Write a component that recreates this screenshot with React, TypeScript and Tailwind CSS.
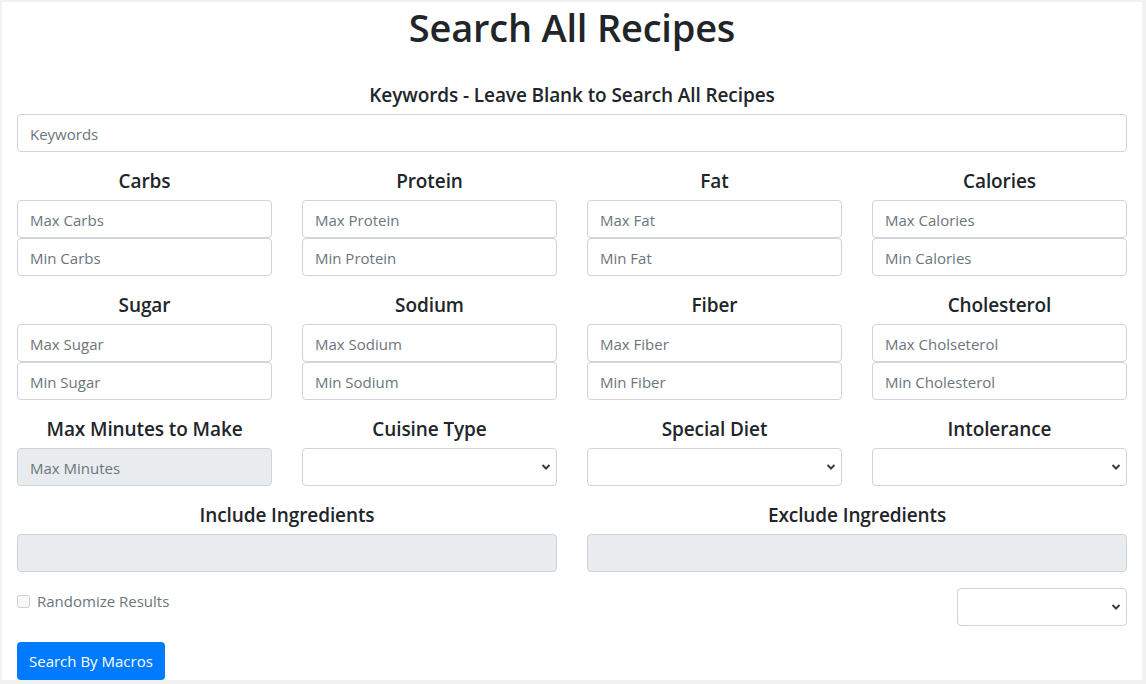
import React from "react";

const font = { fontFamily: '"Segoe UI", "Open Sans", "Noto Sans", sans-serif' };

function Heading({ children }: { children: React.ReactNode }) {
  return (
    <h5 className="mb-2 pt-[2px] text-center text-[19px] font-semibold leading-[22px] tracking-[-0.1px] text-[#212529]">
      {children}
    </h5>
  );
}

function TextInput({
  placeholder,
  disabled,
  className = "",
}: {
  placeholder?: string;
  disabled?: boolean;
  className?: string;
}) {
  return (
    <input
      type="text"
      placeholder={placeholder}
      disabled={disabled}
      className={`block h-[38px] w-full rounded-[4px] border border-[#ced4da] px-3 pt-[2px] text-[15px] text-[#495057] placeholder:text-[#6c757d] outline-none ${
        disabled ? "bg-[#e9ecef]" : "bg-white"
      } ${className}`}
    />
  );
}

function Select({ className = "" }: { className?: string }) {
  return (
    <div className={`relative ${className}`}>
      <select className="block h-[38px] w-full appearance-none rounded-[4px] border border-[#ced4da] bg-white px-3 text-[15px] text-[#495057] outline-none">
        <option></option>
      </select>
      <svg
        className="pointer-events-none absolute right-[6px] top-1/2 -translate-y-1/2"
        width="10"
        height="7"
        viewBox="0 0 10 7"
      >
        <path d="M1.5 1.5 L5 5 L8.5 1.5" fill="none" stroke="#3c3c3c" strokeWidth="2" />
      </svg>
    </div>
  );
}

const macros = [
  ["Carbs", "Max Carbs", "Min Carbs"],
  ["Protein", "Max Protein", "Min Protein"],
  ["Fat", "Max Fat", "Min Fat"],
  ["Calories", "Max Calories", "Min Calories"],
  ["Sugar", "Max Sugar", "Min Sugar"],
  ["Sodium", "Max Sodium", "Min Sodium"],
  ["Fiber", "Max Fiber", "Min Fiber"],
  ["Cholesterol", "Max Cholseterol", "Min Cholesterol"],
];

export default function App() {
  return (
    <div className="h-[684px] overflow-hidden bg-[#f1f1f1] pl-[2px] pt-[2px]" style={font}>
      <div className="h-[678px] w-[1140px] overflow-hidden bg-white px-[15px] pt-[1px] text-[#212529]">
        <h1 className="mb-[31px] text-center text-[38px] font-semibold leading-[48px] tracking-[-0.2px]">
          Search All Recipes
        </h1>

        <div className="mb-4">
          <Heading>Keywords - Leave Blank to Search All Recipes</Heading>
          <TextInput placeholder="Keywords" />
        </div>

        <div className="grid grid-cols-4 gap-x-[30px]">
          {macros.map(([label, max, min]) => (
            <div key={label} className="mb-4">
              <Heading>{label}</Heading>
              <TextInput placeholder={max} />
              <TextInput placeholder={min} />
            </div>
          ))}
        </div>

        <div className="grid grid-cols-4 gap-x-[30px]">
          <div className="mb-4">
            <Heading>Max Minutes to Make</Heading>
            <TextInput placeholder="Max Minutes" disabled />
          </div>
          <div className="mb-4">
            <Heading>Cuisine Type</Heading>
            <Select />
          </div>
          <div className="mb-4">
            <Heading>Special Diet</Heading>
            <Select />
          </div>
          <div className="mb-4">
            <Heading>Intolerance</Heading>
            <Select />
          </div>
        </div>

        <div className="grid grid-cols-2 gap-x-[30px]">
          <div className="mb-4">
            <Heading>Include Ingredients</Heading>
            <TextInput disabled />
          </div>
          <div className="mb-4">
            <Heading>Exclude Ingredients</Heading>
            <TextInput disabled />
          </div>
        </div>

        <div className="mb-4 flex items-start justify-between">
          <label className="flex items-center pt-px text-[15px] leading-[24px] text-[#6c757d]">
            <input
              type="checkbox"
              disabled
              className="mr-[7px] h-[13px] w-[13px] rounded-[2px] border border-[#d0d0d0]"
            />
            Randomize Results
          </label>
          <Select className="w-[170px]" />
        </div>

        <button className="h-[38px] rounded-[4px] bg-[#007bff] px-3 pt-px text-[15px] text-white">
          Search By Macros
        </button>
      </div>
    </div>
  );
}
